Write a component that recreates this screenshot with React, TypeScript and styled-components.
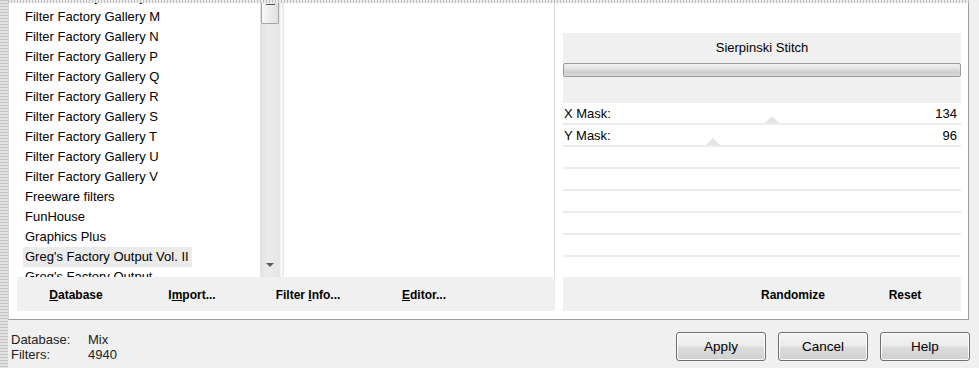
import React from 'react'
import styled, { createGlobalStyle } from 'styled-components'

const GlobalStyle = createGlobalStyle`
  html, body {
    margin: 0;
    padding: 0;
  }
  body {
    font-family: 'Liberation Sans', Arial, sans-serif;
    background: #f0f0f0;
  }
`

const Window = styled.div`
  width: 979px;
  height: 368px;
  display: flex;
  overflow: hidden;
  background: #f0f0f0;
`

const EdgeStrip = styled.div`
  width: 8px;
  flex: none;
  background-color: #dadada;
  background-image: repeating-linear-gradient(180deg, #c2c2c2 0 1px, #e2e2e2 1px 3px);
`

const Body = styled.div`
  flex: 1;
  min-width: 0;
  display: flex;
  flex-direction: column;
`

const TopEdge = styled.div`
  height: 3px;
  width: 961px;
  background-color: #e4e4e4;
  background-image: repeating-linear-gradient(90deg, #bcbcbc 0 1px, #ececec 1px 3px);
`

const MainPanel = styled.div`
  box-sizing: border-box;
  width: 961px;
  height: 317px;
  background: #fff;
  border-left: 1px solid #d6d6d6;
  border-right: 1px solid #9c9c9c;
  border-bottom: 1px solid #9c9c9c;
  padding: 0 7px 8px 8px;
  display: grid;
  grid-template-columns: 538px 398px;
  column-gap: 8px;
`

const Section = styled.div`
  display: flex;
  flex-direction: column;
  min-height: 0;
`

const ListArea = styled.div`
  flex: 1;
  min-height: 0;
  display: flex;
`

const ListBox = styled.div`
  width: 243px;
  overflow: hidden;
`

const ListInner = styled.ul`
  list-style: none;
  margin: -16px 0 0;
  padding: 0;
`

const ListItem = styled.li`
  height: 20px;
  line-height: 20px;
  font-size: 13px;
  color: #000;
  white-space: nowrap;
  padding-left: 6px;
`

const ItemLabel = styled.span<{ $selected?: boolean }>`
  display: inline-block;
  padding: 0 3px 0 2px;
  background: ${(p) => (p.$selected ? '#ebebeb' : 'transparent')};
`

const Scrollbar = styled.div`
  width: 20px;
  flex: none;
  display: flex;
  flex-direction: column;
  align-items: center;
  background: linear-gradient(90deg, #e2e2e2 0, #ebebeb 40%, #e6e6e6 100%);
  border-right: 1px solid #f2f2f2;
`

const Thumb = styled.div`
  box-sizing: border-box;
  width: 18px;
  height: 21px;
  border: 1px solid #a4a4a4;
  border-top: none;
  border-radius: 0 0 2px 2px;
  background: linear-gradient(90deg, #f8f8f8, #e0e0e0);
  display: flex;
  justify-content: center;
`

const Grip = styled.div`
  width: 9px;
  height: 1px;
  margin-top: 1px;
  background: #505050;
`

const DownArrow = styled.div`
  margin-top: auto;
  margin-bottom: 10px;
  width: 0;
  height: 0;
  border-left: 4px solid transparent;
  border-right: 4px solid transparent;
  border-top: 4px solid #5c5c5c;
`

const FilterBox = styled.div`
  flex: 1;
  border-left: 2px solid #ececec;
  border-right: 1px solid #d8d8d8;
  margin-left: 1px;
`

const Band = styled.div<{ $align?: 'start' | 'end' }>`
  height: 34px;
  flex: none;
  background: #f0f0f0;
  display: flex;
  align-items: center;
  justify-content: ${(p) => (p.$align === 'end' ? 'flex-end' : 'flex-start')};
  padding-left: ${(p) => (p.$align === 'end' ? '0' : '1px')};
`

const BandButton = styled.div<{ $width: number }>`
  width: ${(p) => p.$width}px;
  text-align: center;
  font-size: 12px;
  font-weight: bold;
  color: #000;
  line-height: 34px;
  padding-top: 1px;
`

const TopSpace = styled.div`
  height: 30px;
  flex: none;
`

const TitleBand = styled.div`
  height: 70px;
  flex: none;
  background: #f0f0f0;
  display: flex;
  flex-direction: column;
`

const Title = styled.div`
  height: 30px;
  line-height: 30px;
  text-align: center;
  font-size: 13px;
  color: #000;
`

const ProgressBar = styled.div`
  box-sizing: border-box;
  height: 14px;
  border: 1px solid #9a9a9a;
  border-radius: 2px;
  background: linear-gradient(180deg, #f2f2f2 0, #e4e4e4 35%, #cdcdcd 70%, #dadada 100%);
`

const Rows = styled.div`
  flex: 1;
  display: flex;
  flex-direction: column;
`

const ParamRow = styled.div`
  position: relative;
  box-sizing: border-box;
  height: 22px;
  flex: none;
  border-bottom: 2px solid #ececec;
  display: flex;
  align-items: center;
  justify-content: space-between;
  padding: 0 4px 0 1px;
  font-size: 13px;
  color: #000;

  &:last-child {
    flex: 1;
    border-bottom: none;
  }
`

const SliderMark = styled.div`
  position: absolute;
  bottom: 0;
  width: 0;
  height: 0;
  border-left: 7px solid transparent;
  border-right: 7px solid transparent;
  border-bottom: 7px solid #e4e4e4;
`

const StatusBar = styled.div`
  flex: 1;
  display: flex;
  justify-content: space-between;
  align-items: flex-start;
  padding: 12px 9px 0 3px;
`

const InfoGrid = styled.div`
  display: grid;
  grid-template-columns: 77px auto;
  line-height: 15px;
  font-size: 13px;
  color: #222;
`

const Buttons = styled.div`
  display: flex;
  gap: 12px;
`

const PushButton = styled.button`
  box-sizing: border-box;
  width: 90px;
  height: 29px;
  border: 1px solid #707070;
  border-radius: 3px;
  background: linear-gradient(180deg, #f4f4f4 0, #ebebeb 48%, #dddddd 52%, #d0d0d0 100%);
  box-shadow: inset 0 0 0 1px #fbfbfb;
  font-family: 'Liberation Sans', Arial, sans-serif;
  font-size: 13.5px;
  color: #000;
  padding: 0;
`

const filters = [
  'Filter Factory Gallery L',
  'Filter Factory Gallery M',
  'Filter Factory Gallery N',
  'Filter Factory Gallery P',
  'Filter Factory Gallery Q',
  'Filter Factory Gallery R',
  'Filter Factory Gallery S',
  'Filter Factory Gallery T',
  'Filter Factory Gallery U',
  'Filter Factory Gallery V',
  'Freeware filters',
  'FunHouse',
  'Graphics Plus',
  "Greg's Factory Output Vol. II",
  "Greg's Factory Output",
]

const selectedFilter = "Greg's Factory Output Vol. II"

const params = [
  { name: 'X Mask:', value: 134 },
  { name: 'Y Mask:', value: 96 },
]

const TRACK_WIDTH = 398

export default function App() {
  const emptyRows = 8 - params.length

  return (
    <>
      <GlobalStyle />
      <Window>
        <EdgeStrip />
        <Body>
          <TopEdge />
          <MainPanel>
            <Section>
              <ListArea>
                <ListBox>
                  <ListInner>
                    {filters.map((f) => (
                      <ListItem key={f}>
                        <ItemLabel $selected={f === selectedFilter}>{f}</ItemLabel>
                      </ListItem>
                    ))}
                  </ListInner>
                </ListBox>
                <Scrollbar>
                  <Thumb>
                    <Grip />
                  </Thumb>
                  <DownArrow />
                </Scrollbar>
                <FilterBox />
              </ListArea>
              <Band>
                <BandButton $width={116}>
                  <u>D</u>atabase
                </BandButton>
                <BandButton $width={116}>
                  I<u>m</u>port...
                </BandButton>
                <BandButton $width={116}>
                  Filter <u>I</u>nfo...
                </BandButton>
                <BandButton $width={116}>
                  <u>E</u>ditor...
                </BandButton>
              </Band>
            </Section>

            <Section>
              <TopSpace />
              <TitleBand>
                <Title>Sierpinski Stitch</Title>
                <ProgressBar />
              </TitleBand>
              <Rows>
                {params.map((p) => (
                  <ParamRow key={p.name}>
                    <span>{p.name}</span>
                    <span>{p.value}</span>
                    <SliderMark style={{ left: Math.round((p.value / 255) * TRACK_WIDTH) - 7 }} />
                  </ParamRow>
                ))}
                {Array.from({ length: emptyRows }).map((_, i) => (
                  <ParamRow key={i} />
                ))}
              </Rows>
              <Band $align="end">
                <BandButton $width={112}>Randomize</BandButton>
                <BandButton $width={112}>Reset</BandButton>
              </Band>
            </Section>
          </MainPanel>

          <StatusBar>
            <InfoGrid>
              <span>Database:</span>
              <span>Mix</span>
              <span>Filters:</span>
              <span>4940</span>
            </InfoGrid>
            <Buttons>
              <PushButton>Apply</PushButton>
              <PushButton>Cancel</PushButton>
              <PushButton>Help</PushButton>
            </Buttons>
          </StatusBar>
        </Body>
      </Window>
    </>
  )
}
